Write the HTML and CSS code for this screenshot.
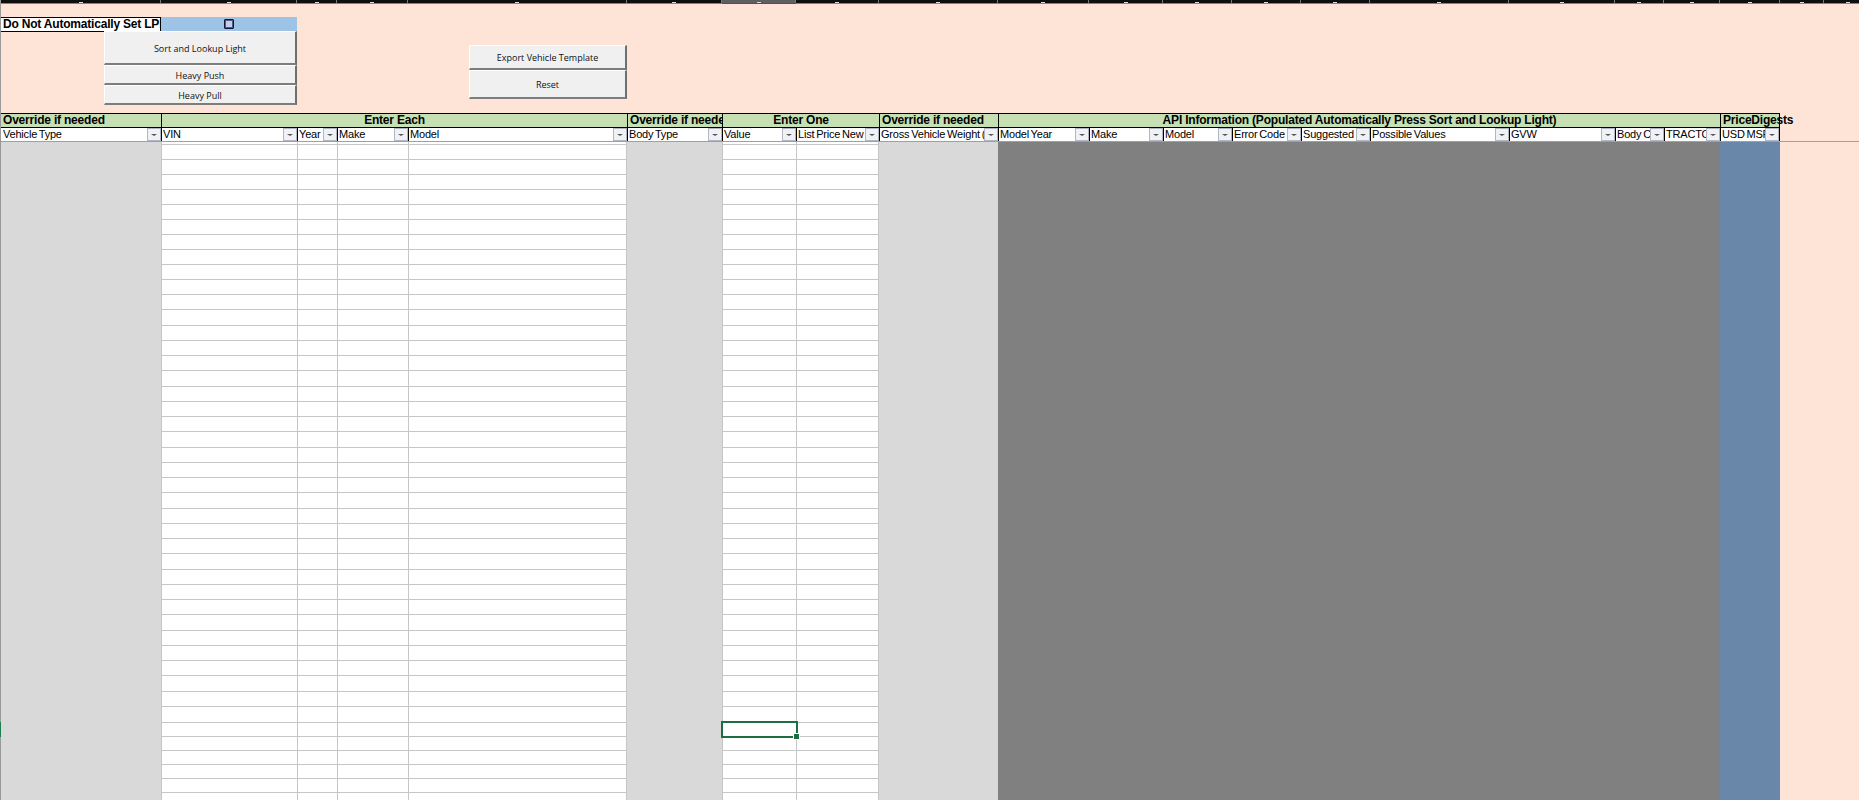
FILE: index.html
```html
<!DOCTYPE html>
<html lang="en">
<head>
<meta charset="utf-8">
<title>Vehicle Template</title>
<link rel="stylesheet" href="styles.css">
</head>
<body>
<div class="sheet">
  <div class="colbar">
    <i></i><i></i><i></i><i></i><i></i><i></i><i class="on"></i><i></i><i></i><i></i><i></i><i></i><i></i><i></i><i></i><i></i><i></i><i></i><i></i><i></i><i></i>
  </div>

  <div class="toolbar">
    <div class="opt-row">
      <div class="opt-label">Do Not Automatically Set LPI</div>
      <div class="opt-check"><span class="checkbox"></span></div>
    </div>
    <div class="btn-stack stack-left">
      <div class="xbtn h-34">Sort and Lookup Light</div>
      <div class="xbtn h-20">Heavy Push</div>
      <div class="xbtn h-20">Heavy Pull</div>
    </div>
    <div class="btn-stack stack-right">
      <div class="xbtn h-25">Export Vehicle Template</div>
      <div class="xbtn h-29">Reset</div>
    </div>
  </div>

  <div class="grid group-row">
    <div class="g first">Override if needed</div>
    <div class="g center s4">Enter Each</div>
    <div class="g">Override if needed</div>
    <div class="g center s2">Enter One</div>
    <div class="g">Override if needed</div>
    <div class="g center s9">API Information (Populated Automatically Press Sort and Lookup Light)</div>
    <div class="g over">PriceDigests</div>
  </div>

  <div class="grid filter-row">
    <div class="f first"><span>Vehicle Type</span><b></b></div>
    <div class="f"><span>VIN</span><b></b></div>
    <div class="f"><span>Year</span><b></b></div>
    <div class="f"><span>Make</span><b></b></div>
    <div class="f"><span>Model</span><b></b></div>
    <div class="f"><span>Body Type</span><b></b></div>
    <div class="f"><span>Value</span><b></b></div>
    <div class="f"><span>List Price New</span><b></b></div>
    <div class="f"><span>Gross Vehicle Weight (</span><b></b></div>
    <div class="f"><span>Model Year</span><b></b></div>
    <div class="f"><span>Make</span><b></b></div>
    <div class="f"><span>Model</span><b></b></div>
    <div class="f"><span>Error Code</span><b></b></div>
    <div class="f"><span>Suggested</span><b></b></div>
    <div class="f"><span>Possible Values</span><b></b></div>
    <div class="f"><span>GVW</span><b></b></div>
    <div class="f"><span>Body Class</span><b></b></div>
    <div class="f"><span>TRACTOR</span><b></b></div>
    <div class="f last"><span>USD MSRP</span><b></b></div>
  </div>

  <div class="grid body">
    <div class="b gray"></div>
    <div class="b rows each s4">
      <div></div><div></div><div></div><div></div><div></div><div></div><div></div><div></div><div></div><div></div><div></div>
      <div></div><div></div><div></div><div></div><div></div><div></div><div></div><div></div><div></div><div></div><div></div>
      <div></div><div></div><div></div><div></div><div></div><div></div><div></div><div></div><div></div><div></div><div></div>
      <div></div><div></div><div></div><div></div><div></div><div></div><div></div><div></div><div></div><div></div><div></div>
    </div>
    <div class="b gray"></div>
    <div class="b rows one s2">
      <div></div><div></div><div></div><div></div><div></div><div></div><div></div><div></div><div></div><div></div><div></div>
      <div></div><div></div><div></div><div></div><div></div><div></div><div></div><div></div><div></div><div></div><div></div>
      <div></div><div></div><div></div><div></div><div></div><div></div><div></div><div></div><div></div><div></div><div></div>
      <div></div><div></div><div></div><div></div><div></div><div></div><div></div><div></div><div></div><div></div><div></div>
      <span class="selection"></span><span class="handle"></span>
    </div>
    <div class="b gray"></div>
    <div class="b dark s9"></div>
    <div class="b blue"></div>
    <span class="row-marker"></span>
  </div>
</div>
</body>
</html>
```

FILE: styles.css
```css
* { box-sizing: border-box; }
html, body { margin: 0; height: 800px; overflow: hidden; }
body { background: #fde4d7; font-family: "Liberation Sans", Arial, sans-serif; color: #000; }

.sheet {
  --cols: 160px 136px 40px 71px 219px 95px 74px 83px 119px 91px 74px 69px 69px 69px 139px 106px 49px 56px 60px 1fr;
  display: flex;
  flex-direction: column;
  height: 800px;
  width: 1859px;
  border-left: 1px solid #9a9a9a;
}

/* Column header strip cut off by the top edge */
.colbar {
  display: grid;
  grid-template-columns: 160px 136px 40px 71px 219px 95px 74px 83px 119px 91px 74px 69px 69px 69px 139px 106px 49px 56px 60px 44px 48px;
  height: 4px;
  flex: none;
  background: #0e0e0e;
  border-bottom: 1px solid #8b8078;
}
.colbar i { position: relative; border-right: 1px solid #777; }
.colbar i::after {
  content: "";
  position: absolute;
  left: 50%;
  bottom: 0;
  width: 4px;
  height: 1px;
  margin-left: -2px;
  background: #ddd;
}
.colbar .on { background: #5f5f5f; box-shadow: 0 1px 0 #1d6f42; }

/* Area above the table */
.toolbar {
  position: relative;
  height: 109px;
  flex: none;
  padding-top: 13px;
}
.opt-row { display: flex; align-items: flex-start; }
.opt-label {
  width: 160px;
  height: 15px;
  padding-left: 2px;
  background: #fff;
  border-top: 1px solid #000;
  border-bottom: 1px solid #000;
  border-right: 1px solid #000;
  font-size: 12px;
  font-weight: 700;
  letter-spacing: -0.2px;
  line-height: 13px;
  white-space: nowrap;
  overflow: hidden;
}
.opt-check {
  display: flex;
  align-items: center;
  justify-content: center;
  width: 136px;
  height: 14px;
  background: #9dc3e6;
}
.checkbox {
  width: 10px;
  height: 10px;
  background: #bcd2ea;
  border: 1px solid #14143c;
  border-radius: 1px;
  box-shadow: inset 0 0 0 1px #55557f;
}

/* Floating form buttons */
.btn-stack { position: absolute; display: flex; flex-direction: column; }
.stack-left { left: 103px; top: 27px; width: 193px; }
.stack-right { left: 468px; top: 41px; width: 158px; }
.xbtn {
  display: flex;
  align-items: center;
  justify-content: center;
  padding-top: 1px;
  background: #f0f0f0;
  border-top: 1px solid #fff;
  border-left: 1px solid #fff;
  border-right: 2px solid #6e6e6e;
  border-bottom: 2px solid #7d7d7d;
  font-family: "Open Sans", sans-serif;
  font-size: 9px;
  color: #111;
}
.h-34 { height: 34px; }
.h-20 { height: 20px; }
.h-25 { height: 25px; }
.h-29 { height: 29px; }

/* Table */
.grid { display: grid; grid-template-columns: var(--cols); flex: none; }
.s2 { grid-column: span 2; }
.s4 { grid-column: span 4; }
.s9 { grid-column: span 9; }

.group-row { height: 14px; }
.g {
  height: 14px;
  padding-left: 2px;
  background: #c6e0b4;
  border-top: 1px solid #000;
  border-left: 1px solid #000;
  font-size: 12px;
  font-weight: 700;
  letter-spacing: -0.2px;
  line-height: 13px;
  white-space: nowrap;
  overflow: hidden;
}
.g.first { border-left: 0; padding-left: 2px; }
.g.center { text-align: center; padding-left: 0; }
.g.over { overflow: visible; border-right: 1px solid #000; }

.filter-row { height: 14px; }
.f {
  display: flex;
  height: 14px;
  background: #fff;
  border-top: 1px solid #000;
  border-left: 1px solid #000;
  font-size: 11px;
  letter-spacing: -0.2px;
  word-spacing: -1px;
  line-height: 13px;
}
.f.first { border-left: 0; }
.f.last { border-right: 1px solid #000; }
.f span { flex: 1; min-width: 0; padding-left: 1px; white-space: nowrap; overflow: hidden; }
.f.first span { padding-left: 2px; }
.f b {
  flex: none;
  position: relative;
  width: 14px;
  background: #f0f1f4;
  border: 1px solid #b2b6c4;
}
.f b::after {
  content: "";
  position: absolute;
  left: 3px;
  top: 5px;
  border-left: 3px solid transparent;
  border-right: 3px solid transparent;
  border-top: 2px solid #555;
}

.body {
  position: relative;
  flex: 1;
  min-height: 0;
  border-top: 1px solid #a0a0a0;
}
.b { overflow: hidden; }
.gray { background: #d9d9d9; }
.dark { background: #808080; }
.blue { background: #6987a8; }

.rows {
  background-color: #fff;
  background-repeat: no-repeat;
  background-image: linear-gradient(#c6c6c6, #c6c6c6), linear-gradient(#c6c6c6, #c6c6c6), linear-gradient(#c6c6c6, #c6c6c6), linear-gradient(#c6c6c6, #c6c6c6), linear-gradient(#c6c6c6, #c6c6c6);
  background-size: 1px 100%;
}
.each { background-position: 0 0, 136px 0, 176px 0, 247px 0, 465px 0; }
.one { background-position: 0 0, 74px 0, 156px 0, 156px 0, 156px 0; overflow: visible; }
.rows > div { height: 15px; border-bottom: 1px solid #c6c6c6; }
.rows > div:first-child { height: 3px; }
.rows > div:nth-child(4n+13) { height: 16px; }
.rows > div:nth-child(39) { height: 16px; }
.rows > div:nth-child(n+40) { height: 14px; }

.selection {
  position: absolute;
  left: 720px;
  top: 579px;
  width: 77px;
  height: 17px;
  border: 2px solid #1d6f42;
}
.handle {
  position: absolute;
  left: 793px;
  top: 592px;
  width: 5px;
  height: 5px;
  background: #1d6f42;
  box-shadow: 0 0 0 1px #fff;
}
.row-marker {
  position: absolute;
  left: -1px;
  top: 580px;
  width: 1px;
  height: 15px;
  background: #1d7f4c;
}
```
